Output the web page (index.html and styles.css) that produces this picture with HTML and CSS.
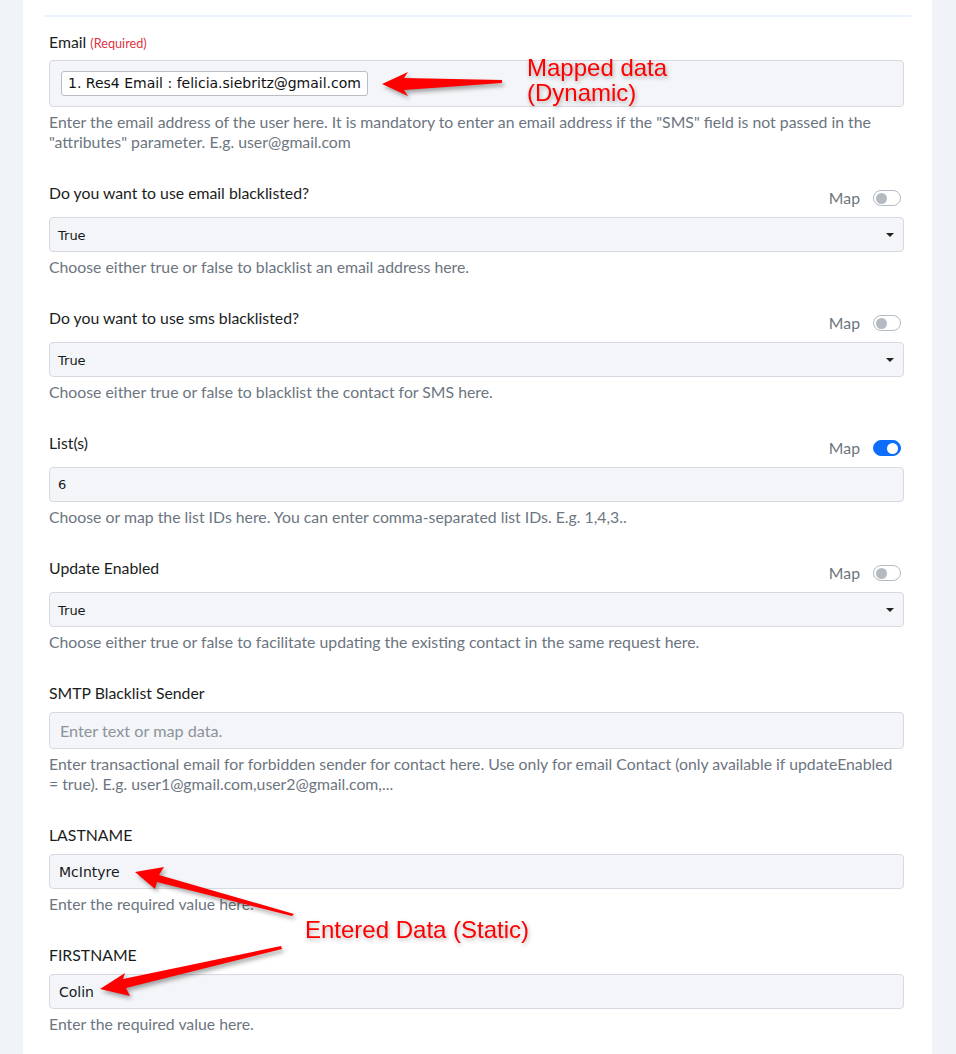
FILE: index.html
```html
<!DOCTYPE html>
<html lang="en">
<head>
    <meta charset="UTF-8">
    <meta name="viewport" content="width=device-width, initial-scale=1.0">
    <title>Create Contact - Field Mapping</title>
    <link rel="stylesheet" href="styles.css">
</head>
<body>
    <div class="page">
        <div class="card">
            <div class="divider"></div>

            <div class="form">
                <!-- Email (mapped) -->
                <div class="field">
                    <div class="field-head compact">
                        <label class="label">Email <span class="required">(Required)</span></label>
                    </div>
                    <div class="map-box">
                        <span class="chip">1. Res4 Email : felicia.siebritz@gmail.com</span>
                    </div>
                    <p class="help">Enter the email address of the user here. It is mandatory to enter an email address if the "SMS" field is not passed in the "attributes" parameter. E.g. user@gmail.com</p>
                </div>

                <div class="field">
                    <div class="field-head with-map">
                        <label class="label">Do you want to use email blacklisted?</label>
                        <div class="map-toggle">Map <span class="switch"><span class="knob"></span></span></div>
                    </div>
                    <div class="select">True <span class="caret"></span></div>
                    <p class="help">Choose either true or false to blacklist an email address here.</p>
                </div>

                <div class="field">
                    <div class="field-head with-map">
                        <label class="label">Do you want to use sms blacklisted?</label>
                        <div class="map-toggle">Map <span class="switch"><span class="knob"></span></span></div>
                    </div>
                    <div class="select">True <span class="caret"></span></div>
                    <p class="help">Choose either true or false to blacklist the contact for SMS here.</p>
                </div>

                <div class="field">
                    <div class="field-head with-map">
                        <label class="label">List(s)</label>
                        <div class="map-toggle">Map <span class="switch on"><span class="knob"></span></span></div>
                    </div>
                    <div class="input">6</div>
                    <p class="help">Choose or map the list IDs here. You can enter comma-separated list IDs. E.g. 1,4,3..</p>
                </div>

                <div class="field">
                    <div class="field-head with-map">
                        <label class="label">Update Enabled</label>
                        <div class="map-toggle">Map <span class="switch"><span class="knob"></span></span></div>
                    </div>
                    <div class="select">True <span class="caret"></span></div>
                    <p class="help">Choose either true or false to facilitate updating the existing contact in the same request here.</p>
                </div>

                <div class="field">
                    <div class="field-head">
                        <label class="label">SMTP Blacklist Sender</label>
                    </div>
                    <div class="input tall placeholder">Enter text or map data.</div>
                    <p class="help">Enter transactional email for forbidden sender for contact here. Use only for email Contact (only available if updateEnabled = true). E.g. user1@gmail.com,user2@gmail.com,...</p>
                </div>

                <div class="field">
                    <div class="field-head">
                        <label class="label">LASTNAME</label>
                    </div>
                    <div class="input value">McIntyre</div>
                    <p class="help">Enter the required value here.</p>
                </div>

                <div class="field">
                    <div class="field-head">
                        <label class="label">FIRSTNAME</label>
                    </div>
                    <div class="input value">Colin</div>
                    <p class="help">Enter the required value here.</p>
                </div>
            </div>
        </div>

        <!-- screenshot annotations drawn over the form -->
        <svg class="notes" width="956" height="1054" viewBox="0 0 956 1054">
            <g class="note-shape">
                <polygon points="382,84 408,72 404,78 502,80 502,83 404,90 408,96"/>
                <polygon points="135,872 164,867 159,875 294,914 292,916 157,882 155,889"/>
                <polygon points="100,989 125,973 123,979 281,946 282,949 126,988 130,996"/>
            </g>
            <g class="note-text">
                <text x="527" y="76">Mapped data</text>
                <text x="527" y="101">(Dynamic)</text>
                <text x="305" y="938">Entered Data (Static)</text>
            </g>
        </svg>
    </div>
</body>
</html>
```

FILE: styles.css
```css
* {
    margin: 0;
    padding: 0;
    box-sizing: border-box;
}

body {
    background-color: #f0f3f7;
    font-family: 'Lato', 'Noto Sans', sans-serif;
    color: #1f2328;
}

.page {
    position: relative;
    width: 956px;
    height: 1054px;
    overflow: hidden;
}

.card {
    margin-left: 23px;
    width: 909px;
    min-height: 1054px;
    background: #fff;
    padding: 15px 21px 0 21px;
}

.divider {
    height: 2px;
    background: #eaf2fc;
}

.form {
    padding: 15px 7px 0 5px;
}

.field {
    margin-bottom: 31px;
}

.field-head {
    display: flex;
    justify-content: space-between;
    align-items: flex-start;
    margin-bottom: 9px;
}

.field-head.compact {
    margin-bottom: 7px;
}

.label {
    font-size: 15.8px;
    line-height: 20px;
    color: #1a1d21;
}

.required {
    font-size: 12.7px;
    color: #dc3545;
}

.map-toggle {
    display: flex;
    align-items: center;
    gap: 13px;
    margin-top: 5px;
    margin-right: 3px;
    font-size: 15.8px;
    line-height: 20px;
    color: #6c757d;
}

.switch {
    display: flex;
    align-items: center;
    width: 28px;
    height: 16px;
    padding: 0 2px;
    border: 1px solid #b3bac1;
    border-radius: 8px;
    background: #fff;
}

.switch .knob {
    width: 11px;
    height: 11px;
    border-radius: 50%;
    background: #b3bac1;
}

.switch.on {
    justify-content: flex-end;
    background: #0d6efd;
    border-color: #0d6efd;
}

.switch.on .knob {
    background: #fff;
}

.map-box,
.select,
.input {
    background: #f3f5f8;
    border: 1px solid #d6dae0;
    border-radius: 4px;
}

.map-box {
    height: 47px;
    padding: 10px 11px;
}

.chip {
    display: inline-block;
    height: 25px;
    padding: 0 6px;
    background: #fff;
    border: 1px solid #b9bec5;
    border-radius: 3px;
    font-family: 'DejaVu Sans', sans-serif;
    font-size: 14px;
    line-height: 23px;
    color: #111;
}

.select,
.input {
    display: flex;
    align-items: center;
    justify-content: space-between;
    height: 35px;
    padding: 0 9px 0 8px;
    font-family: 'DejaVu Sans', sans-serif;
    font-size: 13px;
    color: #16191c;
}

.select {
    padding-top: 2px;
}

.select .caret {
    margin-top: -2px;
}

.input.value {
    font-size: 14px;
    padding-left: 9px;
}

.input.tall {
    height: 37px;
    padding-left: 10px;
}

.placeholder {
    font-family: 'Lato', 'Noto Sans', sans-serif;
    font-size: 16.2px;
    color: #8b939b;
}

.caret {
    width: 0;
    height: 0;
    border-left: 4px solid transparent;
    border-right: 4px solid transparent;
    border-top: 4px solid #222;
}

.help {
    margin-top: 5px;
    font-size: 15.8px;
    line-height: 20px;
    color: #6c7580;
}

.notes {
    position: absolute;
    top: 0;
    left: 0;
    pointer-events: none;
}

.note-shape {
    fill: #ff0000;
    filter: drop-shadow(2px 3px 2px rgba(0, 0, 0, 0.35));
}

.note-text {
    fill: #ff0000;
    font-family: 'Liberation Sans', Arial, sans-serif;
    font-size: 24px;
    filter: drop-shadow(1px 2px 2px rgba(0, 0, 0, 0.3));
}
```
